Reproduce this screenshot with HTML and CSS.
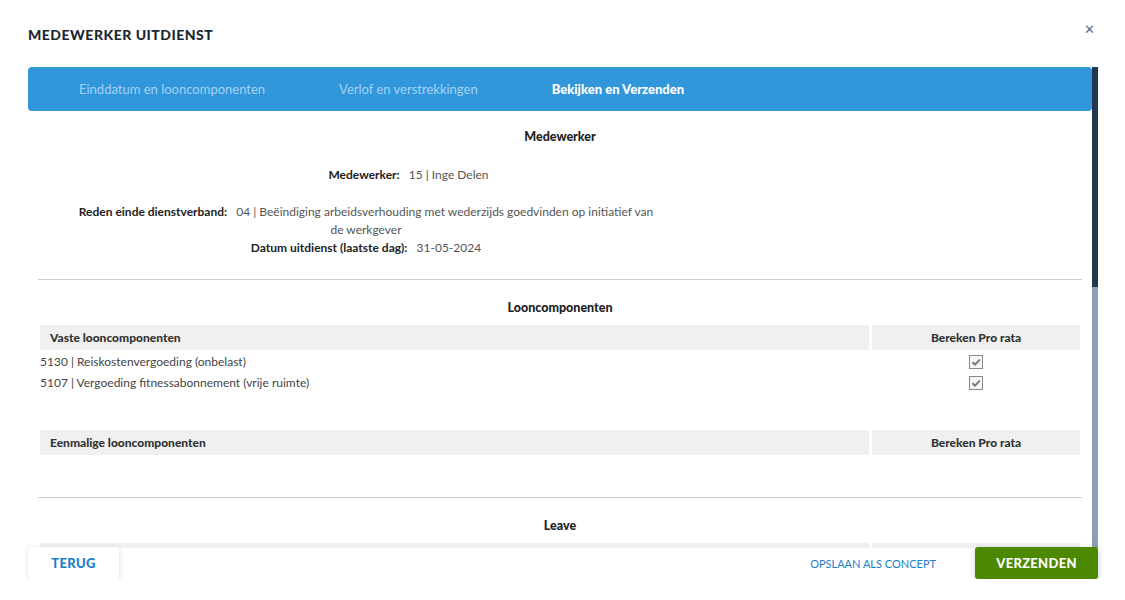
FILE: index.html
```html
<!DOCTYPE html>
<html lang="nl">
<head>
  <meta charset="UTF-8" />
  <title>Medewerker uitdienst</title>
  <link rel="stylesheet" href="styles.css">
</head>
<body>
  <div class="modal">
    <div class="modal-header">
      <h1 class="modal-title">MEDEWERKER UITDIENST</h1>
      <span class="close">&#x2715;</span>
    </div>

    <div class="modal-body">
      <div class="scroll-area">
        <div class="tabs">
          <div class="tab">Einddatum en looncomponenten</div>
          <div class="tab">Verlof en verstrekkingen</div>
          <div class="tab active">Bekijken en Verzenden</div>
        </div>

        <div class="content">
          <!-- Medewerker -->
          <h3 class="section-title">Medewerker</h3>
          <div class="info">
            <p class="info-row first"><b>Medewerker:</b> <span class="val">15 | Inge Delen</span></p>
            <p class="info-row"><b>Reden einde dienstverband:</b> <span class="val">04 | Beëindiging arbeidsverhouding met wederzijds goedvinden op initiatief van de werkgever</span></p>
            <p class="info-row"><b>Datum uitdienst (laatste dag):</b> <span class="val">31-05-2024</span></p>
          </div>

          <hr class="divider">

          <!-- Looncomponenten -->
          <h3 class="section-title">Looncomponenten</h3>
          <table class="grid">
            <thead>
              <tr><th>Vaste looncomponenten</th><th class="col-check">Bereken Pro rata</th></tr>
            </thead>
            <tbody>
              <tr>
                <td>5130 | Reiskostenvergoeding (onbelast)</td>
                <td class="col-check"><span class="check"><svg viewBox="0 0 12 12"><path d="M2.5 6.2 L5 8.6 L9.8 3.6" /></svg></span></td>
              </tr>
              <tr>
                <td>5107 | Vergoeding fitnessabonnement (vrije ruimte)</td>
                <td class="col-check"><span class="check"><svg viewBox="0 0 12 12"><path d="M2.5 6.2 L5 8.6 L9.8 3.6" /></svg></span></td>
              </tr>
            </tbody>
          </table>

          <table class="grid once">
            <thead>
              <tr><th>Eenmalige looncomponenten</th><th class="col-check">Bereken Pro rata</th></tr>
            </thead>
          </table>

          <hr class="divider">

          <!-- Leave -->
          <h3 class="section-title">Leave</h3>
          <table class="grid">
            <thead>
              <tr><th></th><th class="col-check"></th></tr>
            </thead>
          </table>
        </div>
      </div>
      <div class="scrollbar"><div class="thumb"></div></div>
    </div>

    <div class="modal-footer">
      <button class="btn btn-back">TERUG</button>
      <div class="footer-right">
        <button class="btn-link">OPSLAAN ALS CONCEPT</button>
        <button class="btn btn-send">VERZENDEN</button>
      </div>
    </div>
  </div>
</body>
</html>
```

FILE: styles.css
```css
body {
  margin: 0;
  padding: 0;
  background: #ffffff;
  font-family: Lato, "Open Sans", sans-serif;
  color: #333;
}
.modal {
  width: 1070px;
  padding: 0 27px 0 28px;
}
.modal-header {
  height: 67px;
  display: flex;
  align-items: flex-start;
  justify-content: space-between;
}
.modal-title {
  margin: 26px 0 0;
  font-size: 14px;
  font-weight: 900;
  letter-spacing: 0.5px;
  color: #1d2731;
}
.close {
  margin: 21px 3px 0 0;
  font-size: 13px;
  color: #5b7089;
  cursor: pointer;
}

/* scroll area incl. tabs */
.modal-body {
  height: 481px;
  display: flex;
}
.scroll-area {
  flex: 1;
  overflow: hidden;
}
.scrollbar {
  width: 6px;
  background: #8ba0b4;
}
.thumb {
  height: 220px;
  background: #22384f;
}
.tabs {
  height: 44px;
  background: #3296da;
  border-radius: 4px;
  display: flex;
  align-items: center;
  gap: 74px;
  padding-left: 51px;
}
.tab {
  font-size: 13px;
  color: #a3d2f6;
}
.tab.active {
  color: #fff;
  font-weight: 900;
}

.content {
  padding: 0 12px;
}
.section-title {
  margin: 0;
  font-size: 12.5px;
  font-weight: 900;
  color: #222;
  text-align: center;
  line-height: 18px;
}
.content > .section-title:first-child {
  padding-top: 17px;
}
.info {
  width: 580px;
  margin-left: 36px;
  padding: 20px 0 22px;
}
.info-row {
  margin: 0;
  text-align: center;
  font-size: 12px;
  line-height: 18px;
}
.info-row b {
  color: #222;
  margin-right: 6px;
}
.info-row.first {
  padding-left: 85px;
  margin-bottom: 19px;
}
.val {
  color: #555;
}
.divider {
  border: 0;
  border-top: 1px solid #ccc;
  margin: 0 -2px;
}
.divider + .section-title {
  margin: 19px 0 8px;
}
.grid {
  width: 100%;
  border-collapse: separate;
  border-spacing: 0;
  font-size: 12px;
}
.grid th {
  background: #f0f0f0;
  height: 25px;
  padding: 0 10px;
  text-align: left;
  font-weight: 900;
  color: #333;
}
.grid th.col-check {
  width: 188px;
  text-align: center;
  border-left: 3px solid #fff;
}
.grid td {
  padding: 0;
  height: 21px;
  color: #444;
}
.grid td.col-check {
  text-align: center;
}
.grid tbody tr:first-child td {
  padding-top: 1px;
}
.grid.once {
  margin: 37px 0 42px;
}
.check {
  display: inline-block;
  width: 12px;
  height: 12px;
  border: 1px solid #8a8a8a;
  background: #f6f6f6;
  vertical-align: middle;
  margin-left: 3px;
}
.check svg {
  display: block;
  width: 12px;
  height: 12px;
  fill: none;
  stroke: #777;
  stroke-width: 2;
}

/* footer */
.modal-footer {
  display: flex;
  justify-content: space-between;
  align-items: center;
  margin-top: -1px;
}
.footer-right {
  display: flex;
  align-items: center;
  gap: 39px;
}
.btn {
  height: 32px;
  border: 0;
  border-radius: 3px;
  font-family: inherit;
  font-size: 13px;
  font-weight: 900;
  letter-spacing: 0.3px;
  cursor: pointer;
}
.btn-back {
  width: 91px;
  background: #fff;
  color: #1b7ec9;
  box-shadow: 0 1px 5px rgba(0,0,0,0.15);
}
.btn-send {
  width: 123px;
  background: #4d8900;
  color: #fff;
  box-shadow: 0 2px 6px rgba(0,0,0,0.2);
}
.btn-link {
  border: 0;
  background: none;
  padding: 0;
  font-family: inherit;
  font-size: 11px;
  color: #1b7ec9;
  cursor: pointer;
}
```
